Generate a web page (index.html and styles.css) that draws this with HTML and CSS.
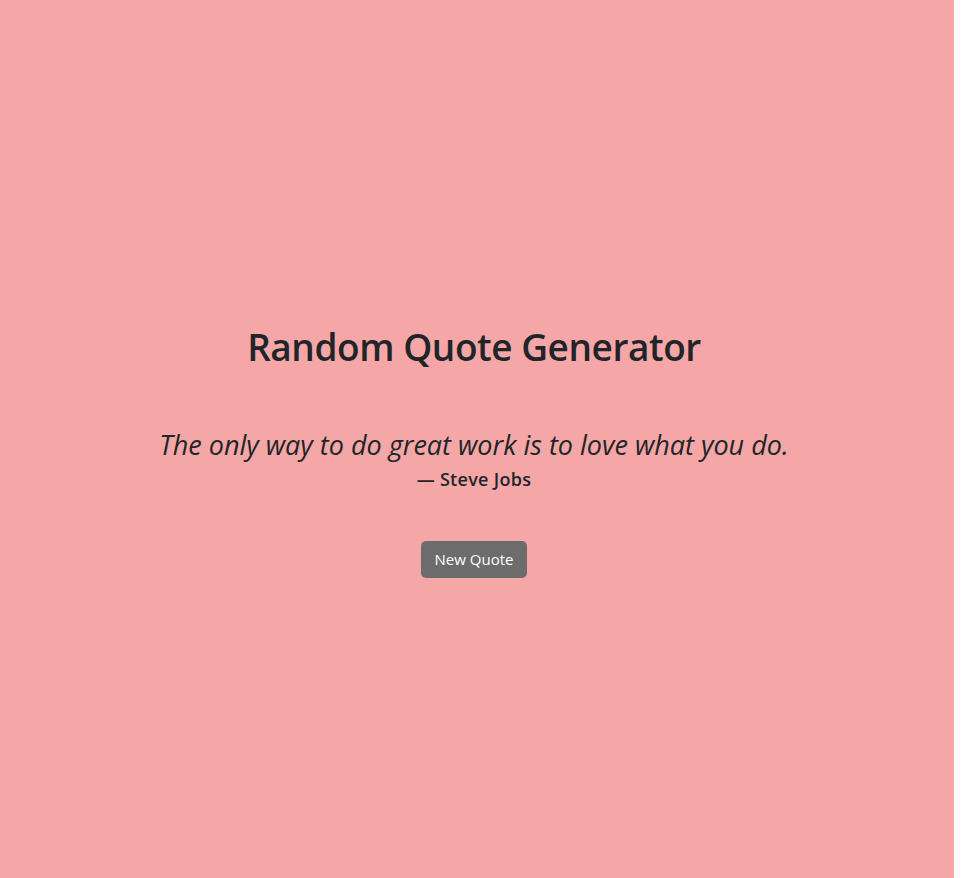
FILE: index.html
```html
<!DOCTYPE html>
<html lang="en">
<head>
<meta charset="utf-8">
<title>Random Quote Generator</title>
<link rel="stylesheet" href="styles.css">
</head>
<body>
<main class="page">
  <div class="container">
    <h1 class="title">Random Quote Generator</h1>
    <blockquote class="quote">
      <p class="quote-text">The only way to do great work is to love what you do.</p>
      <footer class="quote-author">— Steve Jobs</footer>
    </blockquote>
    <button class="btn-new" type="button">New Quote</button>
  </div>
</main>
</body>
</html>
```
FILE: styles.css
```css
html {
  background: #ffffff;
}
body {
  margin: 0;
  font-family: "Open Sans", "Noto Sans", sans-serif;
  color: #212529;
}
.page {
  box-sizing: border-box;
  width: 954px;
  min-height: 878px;
  padding-right: 6px;
  background: #f5a7a7;
  display: flex;
  align-items: center;
  justify-content: center;
}
.container {
  display: flex;
  flex-direction: column;
  align-items: center;
  text-align: center;
  padding-top: 25px;
}
.title {
  margin: 0 0 59px;
  font-size: 37px;
  font-weight: 600;
  line-height: 1.2;
  letter-spacing: -0.45px;
}
.quote {
  margin: 0 0 49px;
}
.quote-text {
  margin: 0 0 7px;
  font-size: 27px;
  font-style: italic;
  font-weight: 400;
  line-height: 1.2;
  letter-spacing: 0;
}
.quote-author {
  font-size: 18px;
  font-weight: 600;
  line-height: 1.3;
  letter-spacing: 0.3px;
}
.btn-new {
  font-family: "Open Sans", "Noto Sans", sans-serif;
  font-size: 15px;
  color: #ffffff;
  background: #6c6c6c;
  border: none;
  border-radius: 5px;
  padding: 0 13px;
  height: 37px;
  width: 106px;
  cursor: pointer;
}
```
